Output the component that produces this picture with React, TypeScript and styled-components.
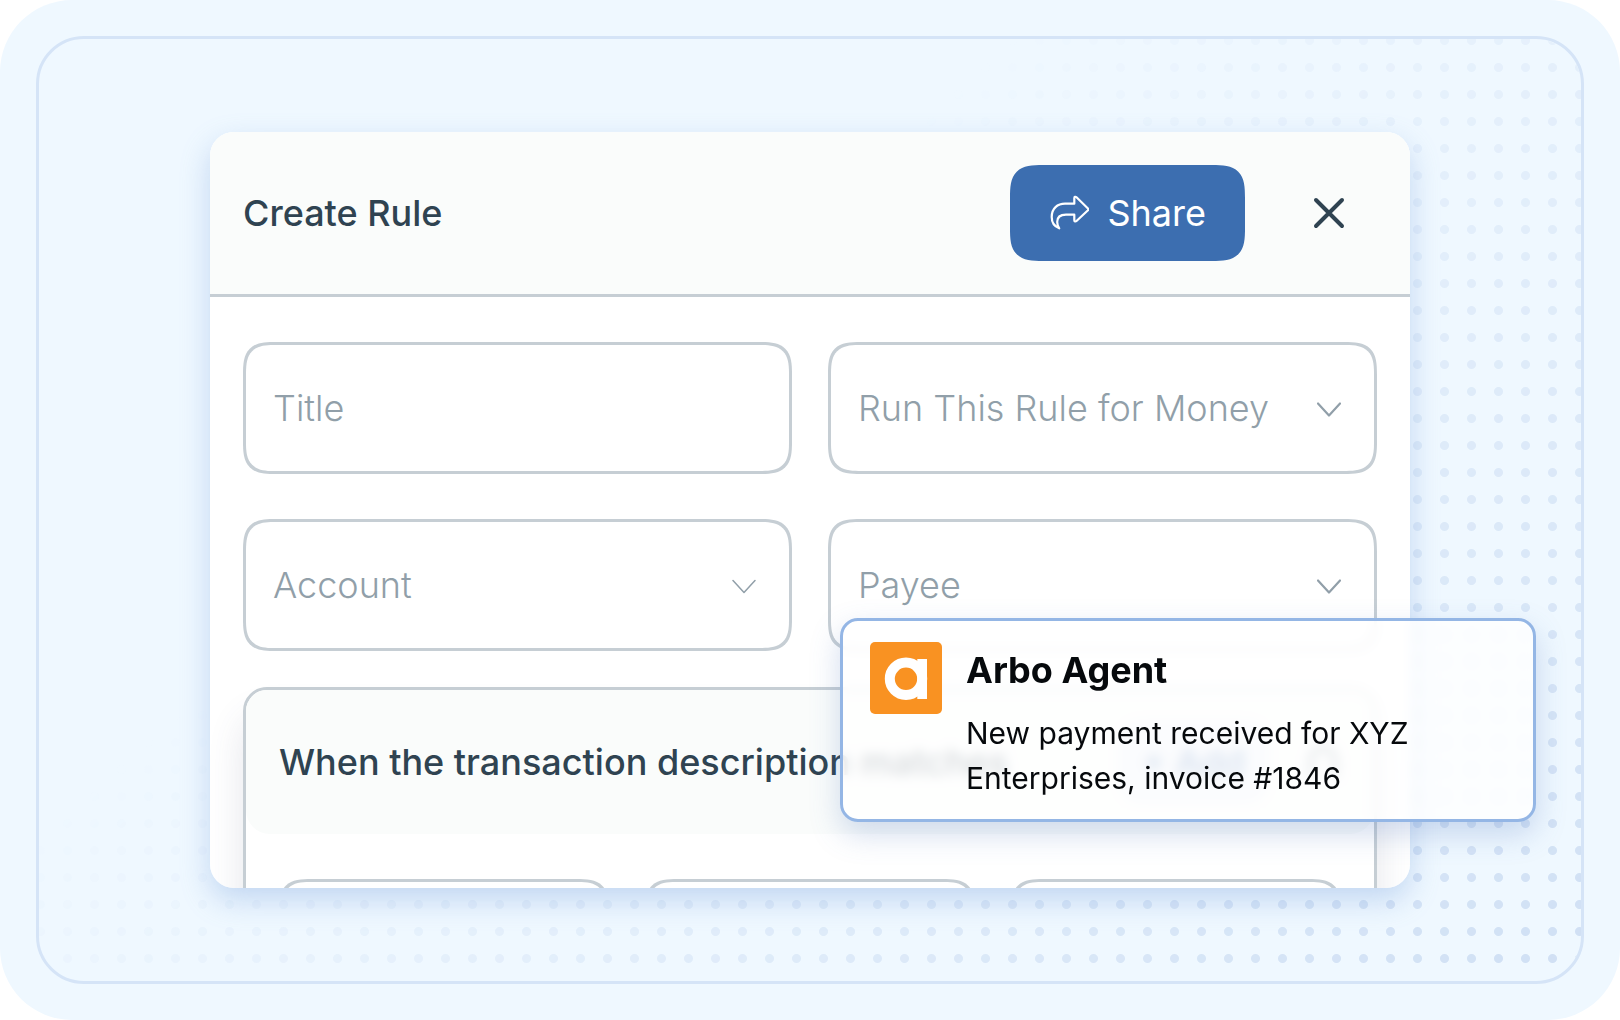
import React from 'react';
import styled, { createGlobalStyle, css } from 'styled-components';

const color = {
  canvas: '#eff8ff',
  line: '#d5e4f7',
  ink: '#2f4351',
  muted: '#919fa9',
  border: '#c6ced4',
  tint: '#fafcfb',
  primary: '#3c6eb0',
  accent: '#94b6e5',
  brand: '#f99222',
};

const GlobalStyle = createGlobalStyle`
  *, *::before, *::after { box-sizing: border-box; }
  body { margin: 0; background: #ffffff; }
  body, button, input, select {
    font-family: Inter, "Liberation Sans", sans-serif;
    font-size: 36px;
    line-height: 45px;
  }
  svg { flex-shrink: 0; }
`;

const smoothCorners = css`
  border-radius: 24px;
  @supports (corner-shape: squircle) {
    border-radius: 33px;
    corner-shape: superellipse(1.6);
  }
`;

const Canvas = styled.div`
  height: 100vh;
  padding: 36px;
  background: ${color.canvas};
  border-radius: 72px;
`;

const Frame = styled.div`
  position: relative;
  height: 100%;
  padding: 93px 171px;
  border: 3px solid ${color.line};
  border-radius: 48px;
`;

const DotGrid = styled.div`
  position: absolute;
  inset: 0;
  border-radius: 45px;
  background-image: radial-gradient(circle, #cfdff4 4px, transparent 5px);
  background-size: 27px 27px;
  background-position: -12px -12px;
  mask-image: linear-gradient(141deg, transparent 36%, #000 100%);
`;

const DialogShadow = styled.div`
  position: relative;
  height: 100%;
  border-radius: 24px;
  box-shadow: 0 12px 30px rgba(100, 145, 215, 0.32);
`;

const Dialog = styled.section`
  position: relative;
  height: 100%;
  overflow: hidden;
  border-radius: 24px;
  background: #ffffff;
`;

const DialogHeader = styled.header`
  display: flex;
  align-items: center;
  gap: 36px;
  padding: 33px;
  background: ${color.tint};
  border-bottom: 3px solid ${color.border};
`;

const DialogTitle = styled.h1`
  flex: 1;
  margin: 0;
  font-size: 36px;
  font-weight: 500;
  color: ${color.ink};
`;

const ShareButton = styled.button`
  display: flex;
  align-items: center;
  gap: 18px;
  height: 96px;
  padding: 0 39px;
  border: 0;
  background: ${color.primary};
  color: #ffffff;
  ${smoothCorners}
`;

const CloseButton = styled.button`
  display: grid;
  place-items: center;
  width: 96px;
  height: 96px;
  padding: 0;
  border: 0;
  background: none;
  color: ${color.ink};
`;

const DialogBody = styled.div`
  padding: 45px 33px;
`;

const FieldGrid = styled.div`
  display: grid;
  grid-template-columns: 1fr 1fr;
  gap: 45px 36px;
`;

const FieldBox = styled.div`
  display: grid;
  align-items: center;
`;

const control = css`
  grid-area: 1 / 1;
  width: 100%;
  height: 132px;
  padding: 0 27px;
  border: 3px solid ${color.border};
  background: #ffffff;
  color: ${color.muted};
  font-weight: 300;
  ${smoothCorners}
`;

const TextInput = styled.input`
  ${control}
  &::placeholder { color: ${color.muted}; opacity: 1; }
`;

const SelectInput = styled.select`
  ${control}
  appearance: none;
`;

const ChevronSlot = styled.span`
  grid-area: 1 / 1;
  justify-self: end;
  display: flex;
  padding-right: 36px;
  color: ${color.muted};
  pointer-events: none;
`;

const RuleGroup = styled.section`
  margin-top: 36px;
  border: 3px solid ${color.border};
  border-radius: 24px;
  background: #ffffff;
  box-shadow: 0 30px 36px rgba(70, 80, 110, 0.14);
`;

const RuleHeader = styled.header`
  display: flex;
  align-items: center;
  height: 144px;
  padding: 0 33px;
  border-radius: 21px 21px 24px 24px;
  background: ${color.tint};
`;

const RuleTitle = styled.h2`
  flex: 1;
  margin: 0;
  font-size: 36px;
  font-weight: 500;
  white-space: nowrap;
  color: ${color.ink};
`;

const AddButton = styled.button`
  height: 84px;
  margin-right: 36px;
  padding: 0 24px;
  border: 0;
  background: #e9eef8;
  color: ${color.primary};
  font-weight: 500;
  ${smoothCorners}
`;

const MoreButton = styled.button`
  display: flex;
  padding: 0;
  border: 0;
  background: none;
  color: ${color.muted};
`;

const RuleFields = styled.div`
  display: grid;
  grid-template-columns: repeat(3, 1fr);
  gap: 36px;
  padding: 45px 33px;
`;

const Toast = styled.aside`
  position: absolute;
  right: 45px;
  bottom: 159px;
  display: flex;
  align-items: flex-start;
  gap: 24px;
  width: 696px;
  padding: 21px 27px 18px;
  border: 3px solid ${color.accent};
  border-radius: 18px;
  background: rgba(255, 255, 255, 0.8);
  backdrop-filter: blur(6px);
  box-shadow: 0 12px 30px rgba(80, 120, 190, 0.26);
`;

const ToastText = styled.div`
  display: grid;
  gap: 12px;
  color: #06090c;
`;

const ToastTitle = styled.h2`
  margin: 0;
  font-size: 36px;
  line-height: 57px;
  font-weight: 700;
`;

const ToastMessage = styled.p`
  margin: 0;
  font-size: 30px;
  line-height: 45px;
`;

const ShareIcon = () => (
  <svg width="40" height="40" viewBox="0 0 40 40" fill="none" stroke="currentColor" strokeWidth="2.2" strokeLinecap="round" strokeLinejoin="round" aria-hidden="true">
    <path d="M25.3 5.2C25.3 3.8 26.500 3.400 27.500 4.300L38.700 15.200C39.500 16 39.500 16.700 38.700 17.500L27.500 28C26.500 28.900 25.300 28.500 25.300 27.200V21.700H17C11 21.700 8.200 24.500 8.200 29C8.200 31.500 9 33.500 10.200 35.300C5.500 33.500 2.700 29.300 2.700 24C2.700 15.500 8.500 10.700 16 10.700H25.300Z" />
  </svg>
);

const CloseIcon = () => (
  <svg width="32" height="32" viewBox="0 0 32 32" fill="none" stroke="currentColor" strokeWidth="4" strokeLinecap="round" aria-hidden="true">
    <path d="M3 3l26 26M29 3L3 29" />
  </svg>
);

const Chevron = ({ weight = 2.2 }: { weight?: number }) => (
  <svg width="24" height="20" viewBox="0 0 24 20" fill="none" stroke="currentColor" strokeWidth={weight} strokeLinecap="round" strokeLinejoin="round" aria-hidden="true">
    <path d="M1 5.500L12 17.500L23 5.500" />
  </svg>
);

const BrandMark = () => (
  <svg width="72" height="72" viewBox="0 0 72 72" aria-hidden="true">
    <rect width="72" height="72" rx="5" fill={color.brand} />
    <circle cx="36" cy="36.800" r="16.200" fill="none" stroke="#ffffff" strokeWidth="10" />
    <rect x="47.300" y="17" width="9.700" height="40" fill="#ffffff" />
  </svg>
);

const SelectField = ({ label, chevronWeight }: { label: string; chevronWeight?: number }) => (
  <FieldBox>
    <SelectInput aria-label={label} defaultValue="">
      <option value="">{label}</option>
    </SelectInput>
    <ChevronSlot>
      <Chevron weight={chevronWeight} />
    </ChevronSlot>
  </FieldBox>
);

const TextField = ({ label, placeholder }: { label: string; placeholder?: string }) => (
  <FieldBox>
    <TextInput type="text" aria-label={label} placeholder={placeholder} />
  </FieldBox>
);

export default function App() {
  return (
    <>
      <GlobalStyle />
      <Canvas>
        <Frame>
          <DotGrid />
          <DialogShadow>
            <Dialog>
              <DialogHeader>
                <DialogTitle>Create Rule</DialogTitle>
                <ShareButton type="button">
                  <ShareIcon />
                  Share
                </ShareButton>
                <CloseButton type="button" aria-label="Close">
                  <CloseIcon />
                </CloseButton>
              </DialogHeader>
              <DialogBody>
                <FieldGrid>
                  <TextField label="Title" placeholder="Title" />
                  <SelectField label="Run This Rule for Money" />
                  <SelectField label="Account" chevronWeight={1.5} />
                  <SelectField label="Payee" />
                </FieldGrid>
                <RuleGroup>
                  <RuleHeader>
                    <RuleTitle>When the transaction description matches</RuleTitle>
                    <AddButton type="button">+ Add</AddButton>
                    <MoreButton type="button" aria-label="Remove condition">
                      <svg width="36" height="36" viewBox="0 0 36 36" fill="none" stroke="currentColor" strokeWidth="6" aria-hidden="true">
                        <path d="M6 33V16a12 12 0 0 1 24 0v17" />
                      </svg>
                    </MoreButton>
                  </RuleHeader>
                  <RuleFields>
                    <TextField label="Field" />
                    <TextField label="Operator" />
                    <TextField label="Value" />
                  </RuleFields>
                </RuleGroup>
              </DialogBody>
            </Dialog>
          </DialogShadow>
          <Toast role="status">
            <BrandMark />
            <ToastText>
              <ToastTitle>Arbo Agent</ToastTitle>
              <ToastMessage>New payment received for XYZ Enterprises, invoice #1846</ToastMessage>
            </ToastText>
          </Toast>
        </Frame>
      </Canvas>
    </>
  );
}
